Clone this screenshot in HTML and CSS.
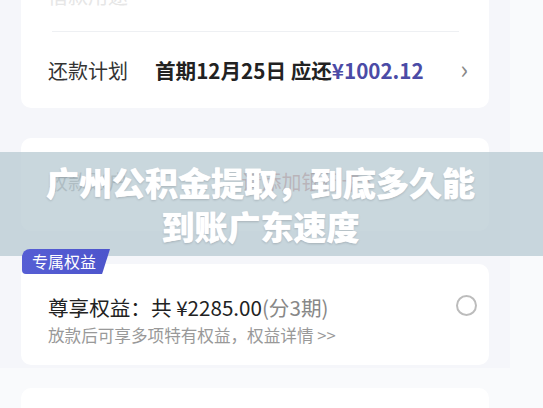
FILE: index.html
```html
<!DOCTYPE html>
<html lang="zh-CN">
<head>
    <meta charset="UTF-8">
    <title>广州公积金提取，到底多久能到账广东速度</title>
    <link rel="stylesheet" href="styles.css">
</head>
<body>

    <div class="page">

        <div class="card card-plan">
            <div class="row row-top">
                <span class="label faint">借款用途</span>
            </div>
            <div class="divider"></div>
            <div class="row row-plan">
                <span class="label">还款计划</span>
                <span class="plan-value">首期12月25日 应还<span class="amount">¥1002.12</span></span>
                <span class="chevron">&rsaquo;</span>
            </div>
        </div>

        <div class="card card-account">
            <div class="row row-account">
                <span class="label muted">收款账户</span>
                <span class="add-card">请添加银行卡 &rsaquo;</span>
            </div>
        </div>

        <div class="benefit">
            <div class="badge">专属权益</div>
            <div class="card card-benefit">
                <div class="benefit-main">
                    <div class="benefit-title">尊享权益：共 ¥2285.00<span class="period">(分3期)</span></div>
                    <div class="benefit-sub">放款后可享多项特有权益，权益详情 &gt;&gt;</div>
                </div>
                <span class="radio"></span>
            </div>
        </div>

        <div class="card card-next"></div>

    </div>

    <div class="headline">
        <h1>广州公积金提取，到底多久能<br>到账广东速度</h1>
    </div>

</body>
</html>
```

FILE: styles.css
```css
body {
    margin: 0;
    background-color: #f9fafc;
    font-family: "Noto Sans CJK SC", "Noto Sans", sans-serif;
    color: #333;
    overflow: hidden;
    height: 408px;
}

.page {
    width: 510px;
    height: 408px;
    background-color: #f5f6fa;
    padding: 0 0 0 21px;
    box-sizing: border-box;
}

.card {
    width: 468px;
    background: #fff;
    border-radius: 10px;
}

/* top card is partly scrolled off the screen */
.card-plan {
    margin-top: -40px;
}

.row {
    display: flex;
    align-items: center;
    padding: 0 27px;
}

.row-top {
    height: 71px;
    font-size: 20px;
}

.divider {
    height: 1px;
    background: #eef0f3;
    margin: 0 30px 0 31px;
}

.row-plan {
    height: 76px;
    font-size: 20px;
}

.label {
    color: #333;
    width: 107px;
    flex-shrink: 0;
}

.label.faint {
    color: #e6e6e6;
}

.label.muted {
    color: #888;
}

.plan-value {
    font-weight: 700;
    font-size: 20.6px;
    color: #222;
    flex: 1;
}

.amount {
    color: #4b4ba6;
}

.chevron {
    color: #888;
    font-size: 26px;
    line-height: 1;
    margin-top: -4px;
    margin-right: -6px;
}

.card-account {
    margin-top: 30px;
    height: 93px;
}

.row-account {
    height: 86px;
    font-size: 20px;
}

.add-card {
    margin-left: auto;
    color: #b7615e;
    margin-right: 90px;
}

.benefit {
    margin-top: 18px;
}

.badge {
    display: inline-block;
    height: 25px;
    line-height: 25px;
    padding: 0 14px 0 10px;
    margin-left: 1px;
    font-size: 16px;
    color: #fff;
    background: linear-gradient(90deg, #565ed4, #4d55cc);
    border-radius: 8px 0 0 4px;
    clip-path: polygon(0 0, 100% 0, 91% 100%, 0 100%);
    position: relative;
    z-index: 1;
}

.card-benefit {
    margin-top: -10px;
    display: flex;
    align-items: center;
    padding: 29px 12px 19px 27px;
    box-sizing: border-box;
}

.benefit-main {
    flex: 1;
}

.benefit-title {
    font-size: 20.6px;
    line-height: 28px;
    color: #222;
}

.period {
    color: #888;
}

.benefit-sub {
    font-size: 16.6px;
    line-height: 22px;
    margin-top: 3px;
    color: #999;
}

.radio {
    width: 17px;
    height: 17px;
    border: 2px solid #bcbcbc;
    border-radius: 50%;
    margin-top: -28px;
}

.card-next {
    margin-top: 23px;
    height: 40px;
}

/* translucent title banner laid over the screenshot */
.headline {
    position: absolute;
    left: 0;
    right: 0;
    top: 152px;
    height: 104px;
    padding: 8px 22px 8px 0;
    box-sizing: border-box;
    background: rgba(186, 204, 212, 0.78);
    text-align: center;
}

.headline h1 {
    margin: 0;
    font-size: 33px;
    line-height: 44px;
    font-weight: 900;
    color: #fff;
    text-shadow: 0 0 1px #fff, 0 1px 2px rgba(60, 70, 80, 0.3);
}
```
